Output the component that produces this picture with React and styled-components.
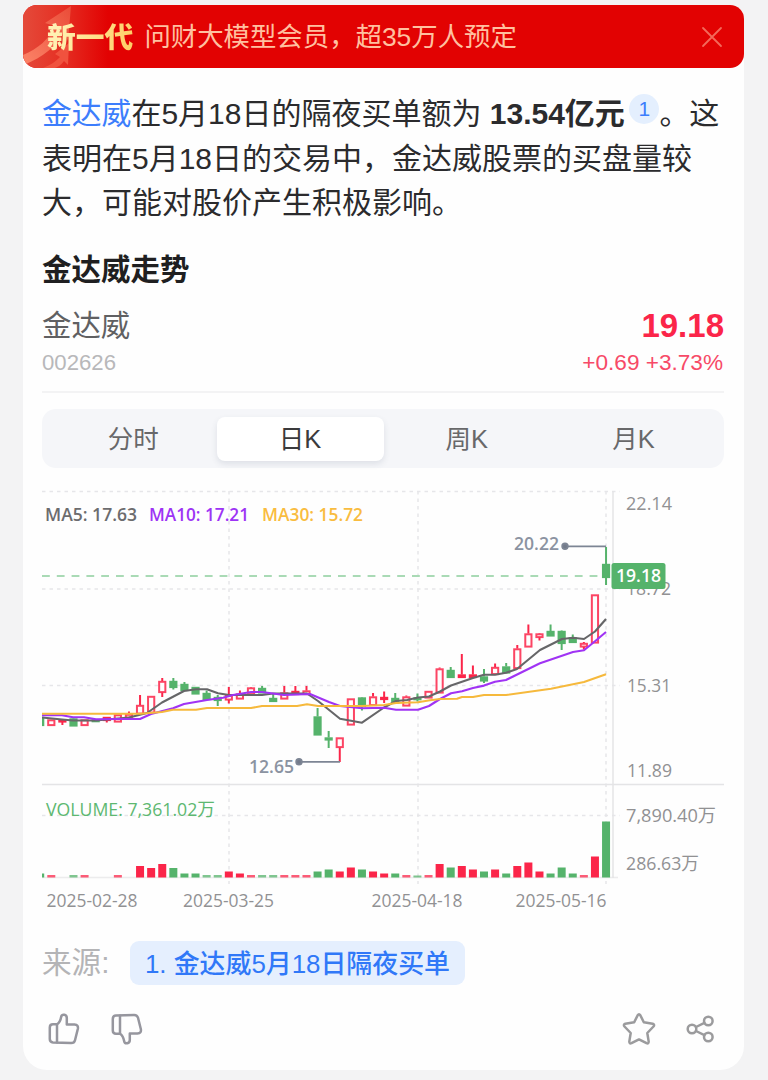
import React from "react"
import styled, { createGlobalStyle } from "styled-components"

const RED = "#fb2549"
const GREEN = "#55b36b"

const GlobalStyle = createGlobalStyle`
  * {
    box-sizing: border-box;
  }

  body {
    margin: 0;
    background: #f3f3f4;
    font-family: "Liberation Sans", "Noto Sans CJK SC", sans-serif;
    color: #2b2b2d;
  }
`

const Page = styled.main`
  height: 1080px;
  padding: 5px 24px 10px 23px;
  overflow: hidden;
`

const Card = styled.article`
  height: 1065px;
  background: #fefefe;
  border-radius: 14px 14px 24px 24px;
`

const Banner = styled.header`
  display: flex;
  align-items: center;
  height: 63px;
  padding: 1px 21px 0 24px;
  border-radius: 14px;
  background: #e20202;
  position: relative;
  overflow: hidden;
`

const BannerArt = styled.svg`
  position: absolute;
  left: 0;
  top: 0;
`

const BannerTag = styled.strong`
  position: relative;
  padding-top: 1px;
  font-size: 28.8px;
  font-weight: 900;
  line-height: 40px;
  color: transparent;
  background: linear-gradient(100deg, #fff2b4 10%, #ffe390 50%, #ffcb62);
  background-clip: text;
`

const BannerText = styled.span`
  position: relative;
  flex: 1;
  margin-left: 11px;
  font-size: 26.4px;
  line-height: 40px;
  color: #ffc0a0;
  white-space: nowrap;
`

const Body = styled.div`
  padding: 24px 20px 0 19px;
`

const Answer = styled.p`
  margin: 0;
  font-size: 30px;
  line-height: 44.6px;
  white-space: nowrap;
`

const Line = styled.span`
  display: block;
  height: 44.6px;
`

const StockLink = styled.a`
  font-size: 29.8px;
  color: #3c7dfc;
`

const Cite = styled.sup`
  display: inline-block;
  width: 30px;
  height: 30px;
  margin-left: 4.5px;
  border-radius: 50%;
  background: #e4effe;
  color: #3c7dfc;
  font-size: 21px;
  line-height: 30px;
  text-align: center;
  vertical-align: 8px;
`

const Heading = styled.h2`
  margin: 22px 0 0;
  font-size: 29.5px;
  font-weight: 700;
  line-height: 44px;
  color: #1f1f21;
`

const Quote = styled.section`
  display: flex;
  justify-content: space-between;
  margin-top: 13px;
  height: 88px;
  border-bottom: 2px solid #f3f3f4;
`

const QuoteSide = styled.div`
  text-align: ${p => (p.$right ? "right" : "left")};
`

const StockName = styled.div`
  font-size: 29.4px;
  line-height: 41px;
  color: #606062;
`

const StockCode = styled.div`
  font-size: 22.2px;
  line-height: 34px;
  color: #b8b8ba;
`

const Price = styled.div`
  font-size: 33px;
  font-weight: 700;
  line-height: 41px;
  color: ${RED};
`

const Change = styled.div`
  padding-right: 1px;
  font-size: 22.6px;
  line-height: 34px;
  color: #f74a67;
`

const Tabs = styled.nav`
  display: flex;
  height: 59px;
  margin-top: 16px;
  padding: 8px 7px 7px 8px;
  border-radius: 14px;
  background: #f5f6f9;
`

const Tab = styled.button`
  flex: 1;
  padding: 0;
  border: 0;
  border-radius: 8px;
  font-family: inherit;
  font-size: 25.5px;
  line-height: 44px;
  color: ${p => (p.$active ? "#3a3a3c" : "#68686a")};
  background: ${p => (p.$active ? "#fff" : "transparent")};
  box-shadow: ${p => (p.$active ? "0 3px 6px rgba(60, 70, 100, 0.12)" : "none")};
`

const Chart = styled.svg`
  display: block;
  margin-top: 16px;
  font-family: "Open Sans", "Noto Sans CJK SC", sans-serif;
  font-size: 18px;
  font-weight: 400;
`

const Sources = styled.div`
  display: flex;
  align-items: center;
  margin-top: 26px;
  font-size: 29.6px;
  line-height: 46px;
  color: #b4b4b6;
`

const SourceChip = styled.a`
  height: 44px;
  margin-left: 20.5px;
  padding: 0 15px;
  border-radius: 9px;
  background: #e5effe;
  color: #3078f8;
  font-size: 25.9px;
  font-weight: 500;
  white-space: nowrap;
`

const Actions = styled.footer`
  display: flex;
  align-items: center;
  margin-top: 26px;
  padding: 0 8px 0 6px;
`

const Spacer = styled.div`
  flex: 1;
`

const Icon = styled.svg`
  display: block;
  margin-left: ${p => p.$gap || 0}px;
  fill: none;
  stroke: ${p => p.$color || "#96969e"};
  stroke-width: 2.5;
  stroke-linecap: round;
  stroke-linejoin: round;
  transform: ${p => (p.$flip ? "scaleY(-1)" : "none")};
`

// [up, bodyTop, bodyBottom, high, low, volume] in chart pixels, one per day
const candles = [
  [0, 717, 725.5, 717, 725.5, 4],
  [1, 719.5, 725.5, 719.5, 725.5, 2.5],
  [1, 719.5, 722, 719.5, 725, 0],
  [0, 718.5, 726, 718, 726, 2.5],
  [1, 719.5, 725.5, 719.5, 725.5, 2.5],
  [0, 719.5, 721.5, 719, 722, 0],
  [1, 717, 720.5, 717, 722.5, 0],
  [1, 714.5, 722, 714.5, 722, 2.5],
  [1, 714, 718, 711.5, 718, 0],
  [1, 705, 714, 695, 714, 11.5],
  [1, 696, 713, 696, 713, 9.5],
  [1, 681, 692.5, 678, 697, 13.5],
  [0, 681, 687.5, 678, 689.5, 9.5],
  [0, 684, 690.5, 682, 690.5, 4],
  [0, 687, 694, 687, 694, 4],
  [0, 693, 699.5, 690.5, 699.5, 2.5],
  [0, 697, 700.5, 695, 706, 2.5],
  [1, 695, 700, 687, 703.5, 6],
  [1, 693.5, 699, 690.5, 699, 4],
  [1, 687.5, 694.5, 687, 695, 2.5],
  [0, 688, 693, 686, 693, 2.5],
  [0, 698, 701.5, 694, 701.5, 2.5],
  [1, 692.5, 699, 686, 699, 2.5],
  [1, 691, 694.5, 686, 694.5, 2.5],
  [1, 690.5, 694.5, 686, 694.5, 2.5],
  [0, 716.5, 735, 708, 735, 6],
  [0, 737.5, 740, 731, 748, 8],
  [1, 737.5, 747.5, 737.5, 762, 6],
  [1, 698.5, 725, 698.5, 725, 10],
  [0, 697.5, 706.5, 697, 710.5, 8],
  [1, 696.5, 705.5, 693, 705.5, 6],
  [1, 697, 699.5, 691.5, 703, 4],
  [0, 698, 703, 693, 704, 4],
  [1, 696.5, 706, 695.5, 706, 2.5],
  [0, 697.5, 699.5, 693.5, 701.5, 2],
  [1, 691, 698, 691, 698, 2.5],
  [1, 668.5, 693, 667.5, 693, 13.5],
  [0, 670, 677.5, 667, 678, 10],
  [1, 674.5, 677.5, 654, 677.5, 11.5],
  [1, 674.5, 677.5, 665.5, 677.5, 8],
  [0, 676.5, 681, 669, 683, 6],
  [1, 667, 674.5, 663.5, 674.5, 8],
  [0, 666.5, 673, 663, 673, 4],
  [1, 648.5, 668.5, 645, 668.5, 11.5],
  [1, 633.5, 647, 624.5, 647, 15],
  [1, 633.5, 637.5, 633, 640.5, 6],
  [0, 631, 636, 624.5, 636, 4],
  [0, 631, 643.5, 630.5, 650, 10],
  [0, 637.5, 642.5, 634.5, 642.5, 4],
  [1, 643, 647, 642, 649.5, 2.5],
  [1, 594.5, 643, 594.5, 643, 21],
  [0, 564, 577.5, 547, 585, 56],
]

const ma5 =
  "42,717.5 62,719.5 73,720.5 96,720.5 129,717.5 147,713 162,702.5 184,691 196,689.3 207,689.3 218,693.3 229,695 262,695 273,693.5 307,693.5 318,701 340,718.7 362,722.7 384,707.5 396,701 407,700 418,697.5 429,696.5 440,691.5 451,685.5 473,678 484,674.7 495,674.7 506,672.7 517,669 540,650 562,639 573,637.7 584,639 595,631.5 606,619"
const ma10 =
  "42,715.3 62,715.3 73,717.3 84,717.3 96,719.3 118,719 140,719 151,714 173,708.3 184,704 207,700 223,697.7 233,695 251,692 262,692 284,695 310,694 329,702 340,706 362,708.3 384,707.7 396,709.7 418,709.7 429,706 440,699 451,693.3 462,691.3 473,688 484,685.6 495,681.7 506,680 540,663.3 573,652 584,650.3 595,641.3 606,632"
const ma30 =
  "42,713.7 140,713.7 162,712 173,709.7 196,709.7 207,708 251,708 262,706 297,706 307,704.3 318,706 362,706 384,705 396,703 418,702.3 430,700.3 440,699 457,698.7 462,697 473,697 484,695 506,695 551,688.7 584,682 606,674.3"

const candleX = i => 40.2 + i * 11.095

const legends = [
  { text: "MA5: 17.63", x: 45, width: 92, color: "#6c6c6e" },
  { text: "MA10: 17.21", x: 149, width: 100, color: "#9d34f5" },
  { text: "MA30: 15.72", x: 262, width: 101, color: "#f9bc40" },
]

const priceLabels = [
  { text: "22.14", x: 626, y: 509.5, width: 46 },
  { text: "18.72", x: 626, y: 595, width: 45 },
  { text: "15.31", x: 627, y: 691.5, width: 44 },
  { text: "11.89", x: 627, y: 776.5, width: 45 },
  { text: "7,890.40万", x: 626, y: 821.5, width: 90 },
  { text: "286.63万", x: 626, y: 869.5, width: 73 },
]

const dates = [
  { text: "2025-02-28", x: 46.5 },
  { text: "2025-03-25", x: 183 },
  { text: "2025-04-18", x: 371.5 },
  { text: "2025-05-16", x: 515.5 },
]

function Label({ text, x, y, width, color, weight }) {
  return (
    <text
      x={x}
      y={y}
      textLength={width}
      lengthAdjust="spacingAndGlyphs"
      fill={color}
      fontWeight={weight}
    >
      {text}
    </text>
  )
}

function Candle({ index, data }) {
  const [up, top, bottom, high, low, volume] = data
  const x = candleX(index)
  const color = up ? RED : GREEN
  const hollow = up && bottom - top > 3.5
  return (
    <g stroke={color} strokeWidth="2">
      {high < top && <line x1={x} x2={x} y1={high} y2={top} />}
      {low > bottom && <line x1={x} x2={x} y1={bottom} y2={low} />}
      <rect
        x={x - 3.1}
        y={top + 0.8}
        width="6.2"
        height={Math.max(bottom - top - 1.2, 1)}
        fill={hollow ? "#fefefe" : color}
        strokeOpacity={hollow ? 0.85 : 1}
      />
      {volume > 0 && (
        <rect
          x={x - 4}
          y={877.5 - volume}
          width="8"
          height={volume}
          fill={color}
          stroke="none"
          opacity={volume < 3 ? 0.75 : 1}
        />
      )}
    </g>
  )
}

function KLineChart() {
  return (
    <Chart width="682" height="430" viewBox="42 484 682 430">
      <defs>
        <clipPath id="plot">
          <rect x="42" y="484" width="571" height="400" />
        </clipPath>
      </defs>
      <g stroke="#e6e6e9" strokeWidth="1.5" strokeDasharray="3.5 4">
        {[491.5, 589, 685.5, 815.5].map(y => (
          <line key={y} x1="42" x2="620" y1={y} y2={y} />
        ))}
        {[229, 418, 606].map(x => (
          <line key={x} x1={x} x2={x} y1="491" y2="884" />
        ))}
      </g>
      <g stroke="#e4e4e6" strokeWidth="1.5">
        <line x1="42" x2="724" y1="784.5" y2="784.5" />
        <line x1="613" x2="613" y1="491" y2="878" />
        <line x1="42" x2="618" y1="877.5" y2="877.5" strokeOpacity="0.7" />
      </g>
      <line
        x1="42"
        x2="606"
        y1="576"
        y2="576"
        stroke="#a9dab5"
        strokeWidth="2"
        strokeDasharray="7.8 7"
      />
      <g clipPath="url(#plot)">
        {candles.map((data, i) => (
          <Candle key={i} index={i} data={data} />
        ))}
        <g fill="none" strokeWidth="2.1" strokeLinejoin="round">
          <polyline points={ma5} stroke="#666668" />
          <polyline points={ma10} stroke="#a033f4" />
          <polyline points={ma30} stroke="#f6b93c" />
        </g>
      </g>

      <g stroke="#7d8594" strokeWidth="1.8" fill="#737b8b">
        <line x1="565" x2="606" y1="546.3" y2="546.3" />
        <circle cx="565" cy="546.3" r="2.8" />
        <line x1="299" x2="340" y1="761.8" y2="761.8" />
        <circle cx="299" cy="761.8" r="2.8" />
      </g>
      <Label text="20.22" x={514} y={550} width={45} color="#8b93a1" weight={600} />
      <Label text="12.65" x={249} y={773} width={45} color="#8b93a1" weight={600} />

      {legends.map(l => (
        <Label key={l.text} {...l} y={520.5} weight={600} />
      ))}
      <Label text="VOLUME: 7,361.02万" x={46} y={816} width={169} color="#5db871" />
      {priceLabels.map(l => (
        <Label key={l.text} {...l} color="#919193" />
      ))}
      {dates.map(l => (
        <Label key={l.text} {...l} y={906.5} width={91} color="#919193" />
      ))}

      <rect x="611.5" y="563" width="54" height="26" rx="2.5" fill={GREEN} />
      <Label text="19.18" x={616} y={582} width={45} color="#fff" weight={600} />
    </Chart>
  )
}

function BannerArrows() {
  return (
    <BannerArt width="110" height="63" viewBox="0 0 110 63">
      <defs>
        <linearGradient id="glow" x1="0" y1="0" x2="1" y2="0">
          <stop offset="0" stopColor="#e44a3a" />
          <stop offset="0.45" stopColor="#e53024" />
          <stop offset="1" stopColor="#e20202" />
        </linearGradient>
        <linearGradient id="arrow" x1="0" y1="1" x2="1" y2="0">
          <stop offset="0" stopColor="#fc8468" />
          <stop offset="1" stopColor="#ea4c38" />
        </linearGradient>
      </defs>
      <rect width="85" height="63" fill="url(#glow)" />
      <path
        d="M0 50 C15 44 26 34 32 21 L22 18 L48 1 L45 36 L41 27 C34 41 20 52 1 60 Z"
        fill="url(#arrow)"
      />
      <path
        d="M20 63 C28 60 33 56 37 52 L32 49 L46 38 L45 60 L41 56 C38 60 35 62 32 63 Z"
        fill="#f0523e"
      />
    </BannerArt>
  )
}

function ThumbIcon({ flip, gap }) {
  return (
    <Icon width="32" height="32" viewBox="0 0 32 32" $flip={flip} $gap={gap}>
      <path d="M5 11.3H9C12 9.5 12.7 6.5 13.2 3.7C14 0.8 18.8 1.2 18.8 5V11.5H26.5Q30.7 11.8 29.8 16L27 27.2Q26.2 30.2 23 30.1L5 29.4Q1.8 29.2 1.8 26V14.5Q1.8 11.3 5 11.3Z" />
      <path d="M9 11.5V29.3" />
    </Icon>
  )
}

const tabs = ["分时", "日K", "周K", "月K"]

export default function App() {
  return (
    <Page>
      <GlobalStyle />
      <Card>
        <Banner>
          <BannerArrows />
          <BannerTag>新一代</BannerTag>
          <BannerText>问财大模型会员，超35万人预定</BannerText>
          <Icon width="22" height="22" viewBox="0 0 22 22" $color="#f3695a">
            <path strokeWidth="1.8" d="M2 2L20 20M20 2L2 20" />
          </Icon>
        </Banner>

        <Body>
          <Answer>
            <Line>
              <StockLink>金达威</StockLink>在5月18日的隔夜买单额为{" "}
              <strong>13.54亿元</strong>
              <Cite>1</Cite>。这
            </Line>
            <Line>表明在5月18日的交易中，金达威股票的买盘量较</Line>
            <Line>大，可能对股价产生积极影响。</Line>
          </Answer>

          <Heading>金达威走势</Heading>

          <Quote>
            <QuoteSide>
              <StockName>金达威</StockName>
              <StockCode>002626</StockCode>
            </QuoteSide>
            <QuoteSide $right>
              <Price>19.18</Price>
              <Change>+0.69 +3.73%</Change>
            </QuoteSide>
          </Quote>

          <Tabs>
            {tabs.map(tab => (
              <Tab key={tab} $active={tab === "日K"}>
                {tab}
              </Tab>
            ))}
          </Tabs>

          <KLineChart />

          <Sources>
            来源:
            <SourceChip>1. 金达威5月18日隔夜买单</SourceChip>
          </Sources>

          <Actions>
            <ThumbIcon />
            <ThumbIcon flip gap={31} />
            <Spacer />
            <Icon width="34" height="34" viewBox="0 0 34 34" $color="#9b9b9d">
              <path d="M15.7 3.2Q17 1.2 18.3 3.2L21.8 10.2L30.7 11.8Q33 12.6 31.5 14.5L25.3 21L26.7 29.6Q26.7 32 24.5 31.2L17 27.4L9.5 31.2Q7.3 32 7.3 29.6L8.7 21L2.5 14.5Q1 12.6 3.3 11.8L12.2 10.2Z" />
            </Icon>
            <Icon width="30" height="30" viewBox="0 0 30 30" $color="#9b9b9d" $gap={30}>
              <circle cx="6" cy="15" r="4.3" />
              <circle cx="22.3" cy="7" r="4.3" />
              <circle cx="22.3" cy="23" r="4.3" />
              <path d="M10 13L18.4 8.9M10 17L18.4 21.1" />
            </Icon>
          </Actions>
        </Body>
      </Card>
    </Page>
  )
}
